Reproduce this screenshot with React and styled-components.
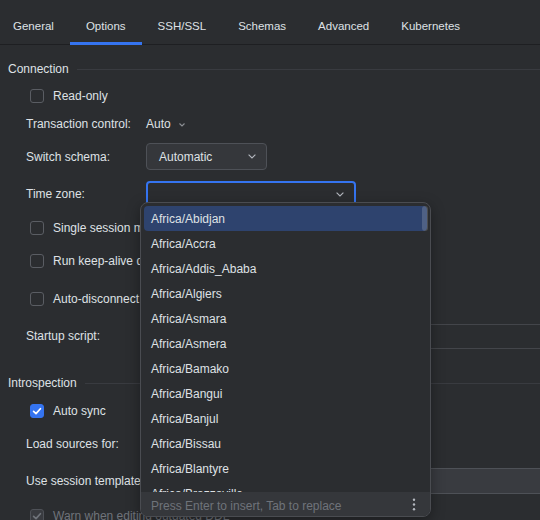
import styled, { createGlobalStyle } from "styled-components";

const Global = createGlobalStyle`
  body { margin: 0; background: #2b2d30; }
`

const tabs = ["General", "Options", "SSH/SSL", "Schemas", "Advanced", "Kubernetes"];

const zones = [
    "Africa/Abidjan", "Africa/Accra", "Africa/Addis_Ababa", "Africa/Algiers",
    "Africa/Asmara", "Africa/Asmera", "Africa/Bamako", "Africa/Bangui",
    "Africa/Banjul", "Africa/Bissau", "Africa/Blantyre", "Africa/Brazzaville",
];

const Chevron = ({ small }) => (
    <svg width={small ? 6 : 8} height={small ? 4 : 5} viewBox={small ? "0 0 6 4" : "0 0 8 5"}>
        <path d={small ? "M0.5 0.5 L3 3 L5.5 0.5" : "M0.6 0.6 L4 4 L7.4 0.6"} fill="none" stroke="currentColor" strokeWidth="1.1" />
    </svg>
)

const Check = ({ checked, disabled }) => (
    <Box $checked={checked} $disabled={disabled}>
        {checked && (
            <svg width="14" height="14" viewBox="0 0 14 14">
                <path d="M3.6 7.3 L6 9.6 L10.4 4.7" fill="none" stroke="currentColor" strokeWidth="1.7" strokeLinecap="round" strokeLinejoin="round" />
            </svg>
        )}
    </Box>
)

const CheckOption = ({ h, label, checked, disabled }) => (
    <CheckRow $h={h}>
        <Check checked={checked} disabled={disabled} />
        <CheckLabel $disabled={disabled}>{label}</CheckLabel>
    </CheckRow>
)

const Kebab = () => (
    <svg width="4" height="13" viewBox="0 0 4 13">
        <circle cx="2" cy="1.8" r="1.2" fill="currentColor" />
        <circle cx="2" cy="6.5" r="1.2" fill="currentColor" />
        <circle cx="2" cy="11.2" r="1.2" fill="currentColor" />
    </svg>
)

const App = () => {

    return (
        <Page>
            <Global />
            <TabBar>
                {tabs.map((t) => (
                    <Tab key={t} $active={t === "Options"}>{t}</Tab>
                ))}
            </TabBar>

            <Content>
                <Header>
                    <span>Connection</span>
                    <Rule />
                </Header>
                <CheckOption h={29} label="Read-only" />
                <Row $h={28}>
                    <Label>Transaction control:</Label>
                    <Link>Auto <Chevron small /></Link>
                </Row>
                <Row $h={37}>
                    <Label>Switch schema:</Label>
                    <Combo $w={121}>Automatic <Chevron /></Combo>
                </Row>
                <Row $h={38}>
                    <Label>Time zone:</Label>
                    <Combo $w={210} $focused><span /> <Chevron /></Combo>
                </Row>
                <CheckOption h={29} label="Single session mode" />
                <CheckOption h={37} label="Run keep-alive query every" />
                <CheckOption h={40} label="Auto-disconnect after" />
                <Row $h={34}>
                    <Label>Startup script:</Label>
                    <Field $height={25} />
                </Row>

                <Header $top={18}>
                    <span>Introspection</span>
                    <Rule />
                </Header>
                <CheckOption h={31} label="Auto sync" checked />
                <Row $h={36}>
                    <Label>Load sources for:</Label>
                    <Combo $w={180}>Everything <Chevron /></Combo>
                </Row>
                <Row $h={38}>
                    <Label>Use session template:</Label>
                    <Field $height={26} $filled />
                </Row>
                <CheckOption h={32} label="Warn when editing outdated DDL" checked disabled />
            </Content>

            <Popup>
                <List>
                    {zones.map((z, i) => (
                        <Item key={z} $selected={i === 0}>{z}</Item>
                    ))}
                    <Thumb />
                </List>
                <Footer>
                    <span>Press Enter to insert, Tab to replace</span>
                    <Kebab />
                </Footer>
            </Popup>
        </Page>
    )
}

export default App;

const Page = styled.div`
position: relative;
width: 540px;
height: 520px;
overflow: hidden;
background: #2b2d30;
color: #dfe1e5;
font-family: "Liberation Sans", Arial, sans-serif;
font-size: 12px;
`

const TabBar = styled.div`
display: flex;
height: 44px;
border-bottom: 1px solid #1e1f22;
font-size: 11.5px;
`

const Tab = styled.div`
position: relative;
display: flex;
align-items: center;
padding: 7px 16px 0;
&:first-child { padding-left: 13px; }

&::after {
    content: "";
    display: ${(p) => (p.$active ? "block" : "none")};
    position: absolute;
    left: 0;
    right: 0;
    bottom: -1px;
    height: 3px;
    background: #3574f0;
}
`

const Content = styled.div`
display: flex;
flex-direction: column;
padding-top: 12px;
`

const Header = styled.div`
display: flex;
align-items: center;
gap: 8px;
height: 24px;
margin-top: ${(p) => p.$top || 0}px;
padding-left: 8px;
`

const Rule = styled.div`
flex: 1;
height: 1px;
background: #393b40;
`

const Row = styled.div`
display: flex;
align-items: center;
height: ${(p) => p.$h}px;
padding-left: 26px;
`

const CheckRow = styled.div`
display: flex;
align-items: center;
gap: 9px;
height: ${(p) => p.$h}px;
padding-left: 30px;
white-space: nowrap;
`

const Box = styled.div`
display: flex;
width: 14px;
height: 14px;
box-sizing: border-box;
flex-shrink: 0;
border-radius: 3px;
border: 1px solid ${(p) => (p.$disabled ? "#4e5157" : p.$checked ? "#3574f0" : "#5a5d63")};
background: ${(p) => (p.$disabled ? "#393b40" : p.$checked ? "#3574f0" : "transparent")};
color: ${(p) => (p.$disabled ? "#6f737a" : "#ffffff")};

svg { margin: -1px; }
`

const CheckLabel = styled.span`
color: ${(p) => (p.$disabled ? "#6f737a" : "#dfe1e5")};
`

const Label = styled.div`
width: 120px;
flex-shrink: 0;
white-space: nowrap;
`

const Link = styled.div`
display: flex;
align-items: center;
gap: 8px;
color: #dfe1e5;

svg { color: #8c8f94; margin-top: 1px; }
`

const Combo = styled.div`
display: flex;
align-items: center;
justify-content: space-between;
box-sizing: border-box;
width: ${(p) => p.$w}px;
height: 27px;
padding: 0 10px 0 ${(p) => (p.$focused ? 11 : 12)}px;
border-radius: 4px;
border: ${(p) => (p.$focused ? "2px solid #3574f0" : "1px solid #4e5157")};
background: ${(p) => (p.$focused ? "#2b2d30" : "#35373b")};

svg { color: #b4b8bf; }
`

const Field = styled.div`
flex: 1;
height: ${(p) => p.$height}px;
box-sizing: border-box;
margin-right: -8px;
border-radius: 4px;
border: 1px solid ${(p) => (p.$filled ? "#4e5157" : "#43454a")};
background: ${(p) => (p.$filled ? "#393b40" : "transparent")};
`

const Popup = styled.div`
position: absolute;
left: 140px;
top: 202px;
width: 291px;
height: 315px;
box-sizing: border-box;
display: flex;
flex-direction: column;
border: 1px solid #4a4c51;
border-radius: 8px;
background: #2b2d30;
overflow: hidden;
box-shadow: 0 4px 14px rgba(0, 0, 0, 0.35);
`

const List = styled.div`
position: relative;
flex: 1;
overflow: hidden;
padding: 3px 3px 0;
`

const Item = styled.div`
display: flex;
align-items: center;
height: 25px;
padding-left: 7px;
border-radius: 4px;
white-space: nowrap;
background: ${(p) => (p.$selected ? "#2e436e" : "transparent")};
`

const Thumb = styled.div`
position: absolute;
top: 3px;
right: 2px;
width: 6px;
height: 25px;
border-radius: 3px;
background: rgba(255, 255, 255, 0.16);
`

const Footer = styled.div`
display: flex;
flex-shrink: 0;
align-items: center;
justify-content: space-between;
height: 24px;
box-sizing: border-box;
padding: 3px 14px 0 10px;
background: #35373b;
color: #6f737a;

svg { color: #b4b8bf; margin-top: -3px; }
`
